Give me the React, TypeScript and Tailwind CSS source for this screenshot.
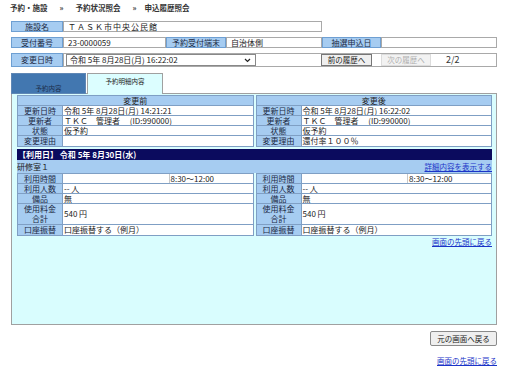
import React from "react";

const LBL = "bg-[#a6ccf1] border border-[#6e9fd2] text-center text-[#1c2a44]";
const BOX = "bg-white border border-[#a9a9a9] pl-[4px]";
const CELL_LBL = "w-[45px] shrink-0 bg-[#a6ccf1] border-r border-[#7f9fc4] text-center text-[#1c2a44]";

interface Row {
  label: string;
  value: React.ReactNode;
}

const HistoryTable: React.FC<{ title: string; rows: Row[] }> = ({ title, rows }) => (
  <div className="flex-1 min-w-0 border border-[#7f9fc4] bg-white">
    <div className="h-[10px] leading-[10px] bg-[#a6ccf1] border-b border-[#7f9fc4] text-center">{title}</div>
    {rows.map((r, i) => (
      <div
        key={r.label}
        className={`flex h-[10px] leading-[10px] ${i < rows.length - 1 ? "border-b border-[#7f9fc4]" : ""}`}
      >
        <div className={CELL_LBL}>{r.label}</div>
        <div className="flex-1 min-w-0 pl-[1px] whitespace-nowrap overflow-hidden">{r.value}</div>
      </div>
    ))}
  </div>
);

const DetailTable: React.FC = () => (
  <div className="flex-1 border border-[#7f9fc4] bg-white">
    {/* 利用時間 */}
    <div className="flex h-[10px] leading-[10px] border-b border-[#7f9fc4]">
      <div className={CELL_LBL}>利用時間</div>
      <div className="flex-1 border-r border-[#c8c8c8]"></div>
      <div className="w-[83px] pl-[1px]">8:30～12:00</div>
    </div>
    <div className="flex h-[10px] leading-[10px] border-b border-[#7f9fc4]">
      <div className={CELL_LBL}>利用人数</div>
      <div className="flex-1 pl-[1px]">-- 人</div>
    </div>
    <div className="flex h-[10px] leading-[10px] border-b border-[#7f9fc4]">
      <div className={CELL_LBL}>備品</div>
      <div className="flex-1 pl-[1px]">無</div>
    </div>
    <div className="flex h-[21px] leading-[10px] border-b border-[#7f9fc4]">
      <div className={`${CELL_LBL} flex flex-col justify-center`}>
        <span>使用料金</span>
        <span>合計</span>
      </div>
      <div className="flex-1 pl-[1px] flex items-center">540 円</div>
    </div>
    <div className="flex h-[10px] leading-[10px]">
      <div className={CELL_LBL}>口座振替</div>
      <div className="flex-1 pl-[1px]">口座振替する（例月）</div>
    </div>
  </div>
);

export default function App() {
  return (
    <div className="w-[512px] h-[377px] bg-white text-[8px] leading-[10px] text-[#222] font-['Noto_Sans_CJK_JP',sans-serif] overflow-hidden">
      {/* パンくず */}
      <div className="flex h-[21px] pt-[3px] pl-[10px] font-bold text-[7.5px] text-[#333]">
        <span>予約・施設</span>
        <span className="ml-[12px]">»</span>
        <span className="ml-[12px]">予約状況照会</span>
        <span className="ml-[12px]">»</span>
        <span className="ml-[8px]">申込履歴照会</span>
      </div>

      <div className="ml-[11px] w-[486px]">
        {/* 施設名 */}
        <div className="flex h-[11px] leading-[9px]">
          <div className={`${LBL} w-[52px]`}>施設名</div>
          <div className={`${BOX} w-[259px] tracking-[1px]`}>ＴＡＳＫ市中央公民館</div>
        </div>

        {/* 受付番号 */}
        <div className="flex h-[11px] leading-[9px] mt-[5px]">
          <div className={`${LBL} w-[52px]`}>受付番号</div>
          <div className={`${BOX} w-[103px]`}>23-0000059</div>
          <div className={`${LBL} w-[60px]`}>予約受付端末</div>
          <div className={`${BOX} w-[96px] pl-[2px]`}>自治体側</div>
          <div className={`${LBL} w-[59px]`}>抽選申込日</div>
          <div className={`${BOX} flex-1`}></div>
        </div>

        {/* 変更日時 */}
        <div className="flex h-[14px] mt-[5px]">
          <div className={`${LBL} w-[52px] leading-[12px]`}>変更日時</div>
          <div className="flex-1 flex items-center bg-white border border-[#a9a9a9] pl-[2px]">
            <div className="w-[190px] h-[12px] border border-[#888] flex items-center justify-between pl-[3px] pr-[4px]">
              <span>令和 5年 8月28日(月) 16:22:02</span>
              <svg width="7" height="5" viewBox="0 0 7 5">
                <path d="M1 1 L3.5 3.5 L6 1" stroke="#222" strokeWidth="1.2" fill="none" />
              </svg>
            </div>
            <button className="ml-[65px] w-[51px] h-[12px] leading-[10px] bg-[#efefef] border border-[#767676] text-[7.5px] text-[#222]">
              前の履歴へ
            </button>
            <button className="ml-[9px] w-[50px] h-[12px] leading-[10px] bg-[#f2f2f2] border border-[#dcdcdc] text-[7.5px] text-[#b0b0b0]">
              次の履歴へ
            </button>
            <span className="ml-[15px] text-[9px] text-[#333]">2/2</span>
          </div>
        </div>

        {/* タブ */}
        <div className="flex h-[21px] mt-[6px] items-end">
          <div className="w-[75px] h-[21px] bg-[#4277b0] border border-[#5f87b5] text-center text-[6.5px] text-[#1b2d4a] pt-[9px]">
            予約内容
          </div>
          <div className="ml-[1px] w-[76px] h-[21px] bg-[#dcfeff] border border-b-0 border-[#a0a0a0] text-center text-[6.5px] pt-[2px] relative z-10">
            予約明細内容
          </div>
        </div>

        {/* パネル */}
        <div className="h-[232px] -mt-px bg-[#d9fdfe] border border-[#a0a0a0] pt-[1px] pl-[5px] pr-[4px]">
          <div className="flex gap-[2px]">
            <HistoryTable
              title="変更前"
              rows={[
                { label: "更新日時", value: "令和 5年 8月28日(月) 14:21:21" },
                { label: "更新者", value: "ＴＫＣ　管理者　 (ID:990000)" },
                { label: "状態", value: "仮予約" },
                { label: "変更理由", value: "" },
              ]}
            />
            <HistoryTable
              title="変更後"
              rows={[
                { label: "更新日時", value: "令和 5年 8月28日(月) 16:22:02" },
                { label: "更新者", value: "ＴＫＣ　管理者　 (ID:990000)" },
                { label: "状態", value: "仮予約" },
                { label: "変更理由", value: "還付率１００％" },
              ]}
            />
          </div>

          <div className="mt-[2px] h-[11px] leading-[11px] bg-[#0b0b5e] text-white font-bold pl-[1px]">
            【利用日】 令和 5年 8月30日(水)
          </div>
          <div className="flex justify-between h-[13px] leading-[13px] bg-[#a6ccf1]">
            <span>研修室１</span>
            <span className="text-[#1a33c8] underline text-[7.5px]">詳細内容を表示する</span>
          </div>

          <div className="flex gap-[2px]">
            <DetailTable />
            <DetailTable />
          </div>

          <div className="flex justify-end mt-[1px]">
            <span className="text-[#1a33c8] underline text-[7.5px]">画面の先頭に戻る</span>
          </div>
        </div>

        <div className="flex justify-end mt-[6px]">
          <button className="w-[67px] h-[15px] leading-[13px] bg-[#efefef] border border-[#8a8a8a] rounded-[2px] text-[7.5px] text-[#222]">
            元の画面へ戻る
          </button>
        </div>
        <div className="flex justify-end mt-[10px]">
          <span className="text-[#1a33c8] underline text-[7.5px]">画面の先頭に戻る</span>
        </div>
      </div>
    </div>
  );
}
